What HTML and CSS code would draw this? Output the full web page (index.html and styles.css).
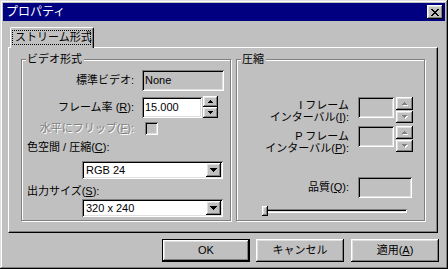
FILE: index.html
```html
<!DOCTYPE html>
<html lang="ja">
<head>
  <meta charset="UTF-8">
  <title>プロパティ</title>
  <link rel="stylesheet" href="styles.css">
</head>
<body>
  <div class="window">
    <div class="titlebar">
      <span class="title">プロパティ</span>
      <span class="close raised">
        <svg width="8" height="7" viewBox="0 0 8 7"><path d="M0 0h2v1H0zM6 0h2v1H6zM1 1h2v1H1zM5 1h2v1H5zM2 2h4v1H2zM3 3h2v1H3zM2 4h4v1H2zM1 5h2v1H1zM5 5h2v1H5zM0 6h2v1H0zM6 6h2v1H6z"/></svg>
      </span>
    </div>

    <div class="content">
      <div class="tabs">
        <div class="tab"><span class="focus">ストリーム形式</span></div>
      </div>

      <div class="page">
        <!-- ビデオ形式 -->
        <div class="group video">
          <span class="legend">ビデオ形式</span>
          <div class="row r1">
            <span class="lbl">標準ビデオ:</span>
            <div class="field sunken readonly std">None</div>
          </div>
          <div class="row r2">
            <span class="lbl">フレーム率 (<u>R</u>):</span>
            <div class="field sunken rate">15.000</div>
            <div class="spin">
              <span class="spin-btn raised"><svg width="5" height="3" viewBox="0 0 5 3"><path d="M2 0h1v1H2zM1 1h3v1H1zM0 2h5v1H0z"/></svg></span>
              <span class="spin-btn raised"><svg width="5" height="3" viewBox="0 0 5 3"><path d="M0 0h5v1H0zM1 1h3v1H1zM2 2h1v1H2z"/></svg></span>
            </div>
          </div>
          <div class="row r3">
            <span class="lbl disabled">水平にフリップ(<u>F</u>):</span>
            <span class="check sunken"></span>
          </div>
          <div class="row r4">
            <span>色空間 / 圧縮(<u>C</u>):</span>
          </div>
          <div class="combo sunken c1">
            <span class="combo-text">RGB 24</span>
            <span class="drop raised"><svg width="7" height="4" viewBox="0 0 7 4"><path d="M0 0h7v1H0zM1 1h5v1H1zM2 2h3v1H2zM3 3h1v1H3z"/></svg></span>
          </div>
          <div class="row r6">
            <span>出力サイズ(<u>S</u>):</span>
          </div>
          <div class="combo sunken c2">
            <span class="combo-text">320 x 240</span>
            <span class="drop raised"><svg width="7" height="4" viewBox="0 0 7 4"><path d="M0 0h7v1H0zM1 1h5v1H1zM2 2h3v1H2zM3 3h1v1H3z"/></svg></span>
          </div>
        </div>

        <!-- 圧縮 -->
        <div class="group comp">
          <span class="legend">圧縮</span>
          <div class="row ri">
            <span class="lbl two"><span class="line">I フレーム</span><span class="line">インターバル(<u>I</u>):</span></span>
            <div class="field sunken readonly small"></div>
            <div class="spin tall">
              <span class="spin-btn raised off"><svg width="5" height="3" viewBox="0 0 5 3"><path d="M2 0h1v1H2zM1 1h3v1H1zM0 2h5v1H0z"/></svg></span>
              <span class="spin-btn raised off"><svg width="5" height="3" viewBox="0 0 5 3"><path d="M0 0h5v1H0zM1 1h3v1H1zM2 2h1v1H2z"/></svg></span>
            </div>
          </div>
          <div class="row rp">
            <span class="lbl two low"><span class="line">P フレーム</span><span class="line">インターバル(<u>P</u>):</span></span>
            <div class="field sunken readonly small"></div>
            <div class="spin tall">
              <span class="spin-btn raised off"><svg width="5" height="3" viewBox="0 0 5 3"><path d="M2 0h1v1H2zM1 1h3v1H1zM0 2h5v1H0z"/></svg></span>
              <span class="spin-btn raised off"><svg width="5" height="3" viewBox="0 0 5 3"><path d="M0 0h5v1H0zM1 1h3v1H1zM2 2h1v1H2z"/></svg></span>
            </div>
          </div>
          <div class="row rq">
            <span class="lbl">品質(<u>Q</u>):</span>
            <div class="field sunken readonly quality"></div>
          </div>
          <div class="slider">
            <span class="track"></span>
            <span class="thumb raised"></span>
          </div>
        </div>
      </div>

      <div class="buttons">
        <span class="btn default"><span class="raised">OK</span></span>
        <span class="btn"><span class="raised">キャンセル</span></span>
        <span class="btn apply"><span class="raised">適用(<u>A</u>)</span></span>
      </div>
    </div>
  </div>
</body>
</html>
```

FILE: styles.css
```css
body {
  margin: 0;
  font-family: "Liberation Sans", "Noto Sans CJK JP", sans-serif;
  font-size: 11px;
  line-height: 13px;
  color: #000;
  background: #c0c0c0;
}
u {
  text-decoration-thickness: 1px;
  text-underline-offset: 1px;
}
svg {
  display: block;
}

/* bevels */
.raised {
  background: #c0c0c0;
  box-shadow: inset -1px -1px #000, inset 1px 1px #fff, inset -2px -2px #808080, inset 2px 2px #dfdfdf;
}
.sunken {
  box-shadow: inset 1px 1px #808080, inset -1px -1px #fff, inset 2px 2px #000, inset -2px -2px #dfdfdf;
}

.window {
  width: 448px;
  height: 269px;
  box-sizing: border-box;
  padding: 3px;
  background: #c0c0c0;
  box-shadow: inset -1px -1px #000, inset 1px 1px #dfdfdf, inset -2px -2px #808080, inset 2px 2px #fff;
}

.titlebar {
  height: 18px;
  background: #000080;
  display: flex;
  align-items: center;
  padding: 0 2px;
}
.title {
  color: #fff;
  font-size: 12px;
  margin-left: 1px;
}
.close {
  margin-left: auto;
  width: 16px;
  height: 14px;
  display: flex;
  align-items: center;
  justify-content: center;
}

.content {
  padding: 6px 0 0 5px;
}

/* tab */
.tabs {
  display: flex;
  height: 21px;
  padding-left: 2px;
  position: relative;
  z-index: 1;
}
.tab {
  width: 84px;
  height: 21px;
  box-sizing: border-box;
  background: #c0c0c0;
  border-left: 1px solid #fff;
  border-top: 1px solid #fff;
  border-right: 1px solid #000;
  border-radius: 2px 2px 0 0;
  box-shadow: inset -1px 0 #808080;
  padding: 2px 2px 0 1px;
  white-space: nowrap;
}
.focus {
  display: block;
  outline: 1px dotted #000;
  outline-offset: -1px;
  height: 15px;
  line-height: 15px;
  padding-left: 3px;
}

.page {
  width: 430px;
  height: 186px;
  box-sizing: border-box;
  margin-top: -1px;
  border-left: 1px solid #fff;
  border-top: 1px solid #fff;
  border-right: 1px solid #000;
  border-bottom: 1px solid #000;
  box-shadow: inset -1px -1px #808080;
  display: flex;
  gap: 5px;
  padding: 11px 0 0 12px;
}

/* group boxes */
.group {
  position: relative;
  height: 162px;
  box-sizing: border-box;
  border: 1px solid #808080;
  box-shadow: inset 1px 1px #fff, 1px 1px #fff;
}
.group.video {
  width: 210px;
}
.group.comp {
  width: 189px;
}
.legend {
  position: absolute;
  top: -7px;
  left: 4px;
  padding: 0 2px 0 1px;
  background: #c0c0c0;
}

.row {
  display: flex;
  align-items: center;
  white-space: nowrap;
}
.lbl {
  width: 112px;
  margin-right: 8px;
  text-align: right;
}
.lbl.two {
  display: flex;
  flex-direction: column;
  align-items: flex-end;
  margin-right: 9px;
  padding-top: 2px;
}
.lbl.two.low {
  padding-top: 4px;
}
.line {
  display: block;
  height: 12px;
  line-height: 12px;
}
.disabled {
  color: #808080;
  text-shadow: 1px 1px #fff;
}

.field {
  height: 21px;
  box-sizing: border-box;
  background: #fff;
  padding: 0 0 0 3px;
  display: flex;
  align-items: center;
}
.field.readonly {
  background: #c0c0c0;
}
.std {
  width: 82px;
}
.rate {
  width: 60px;
}
.small {
  width: 36px;
}
.quality {
  width: 54px;
}

.spin {
  display: flex;
  flex-direction: column;
  width: 15px;
  height: 22px;
  margin-left: 1px;
}
.spin.tall {
  width: 17px;
  height: 26px;
  margin-left: 2px;
  gap: 1px;
}
.spin-btn {
  flex: 1;
  display: flex;
  align-items: center;
  justify-content: center;
}
.spin-btn.off svg {
  fill: #808080;
  filter: drop-shadow(1px 1px 0 #fff);
}

.check {
  width: 13px;
  height: 13px;
  margin-left: 3px;
  background: #c0c0c0;
}

.r1 {
  margin-top: 10px;
}
.r2 {
  margin-top: 5px;
}
.r3 {
  margin-top: 4px;
}
.r4 {
  margin-top: 6px;
  padding-left: 5px;
}
.r6 {
  margin-top: 6px;
  padding-left: 5px;
}

.combo {
  width: 141px;
  height: 18px;
  box-sizing: border-box;
  margin-left: 60px;
  margin-top: 7px;
  background: #fff;
  display: flex;
  align-items: center;
  padding: 2px;
}
.c2 {
  margin-top: 1px;
}
.combo-text {
  flex: 1;
  padding-left: 2px;
}
.drop {
  width: 15px;
  height: 14px;
  display: flex;
  align-items: center;
  justify-content: center;
}

.ri {
  margin-top: 37px;
  align-items: flex-start;
}
.rp {
  margin-top: 3px;
  align-items: flex-start;
}
.rq {
  margin-top: 23px;
}
.rq .lbl {
  margin-right: 9px;
}

.slider {
  position: relative;
  height: 10px;
  margin: 8px 0 0 25px;
  width: 145px;
}
.track {
  position: absolute;
  left: 0;
  right: 0;
  top: 3px;
  height: 4px;
  box-shadow: inset 1px 1px #808080, inset -1px -1px #fff, inset 2px 2px #000, inset -2px -2px #dfdfdf;
}
.thumb {
  position: absolute;
  left: 0;
  top: 0;
  width: 6px;
  height: 10px;
}

/* bottom buttons */
.buttons {
  display: flex;
  justify-content: flex-end;
  gap: 6px;
  margin-top: 6px;
  padding-right: 6px;
}
.btn {
  width: 88px;
  height: 23px;
  box-sizing: border-box;
  display: flex;
}
.btn > span {
  flex: 1;
  display: flex;
  align-items: center;
  justify-content: center;
}
.btn.default {
  border: 1px solid #000;
}
.btn.apply {
  margin-left: 1px;
}
```
